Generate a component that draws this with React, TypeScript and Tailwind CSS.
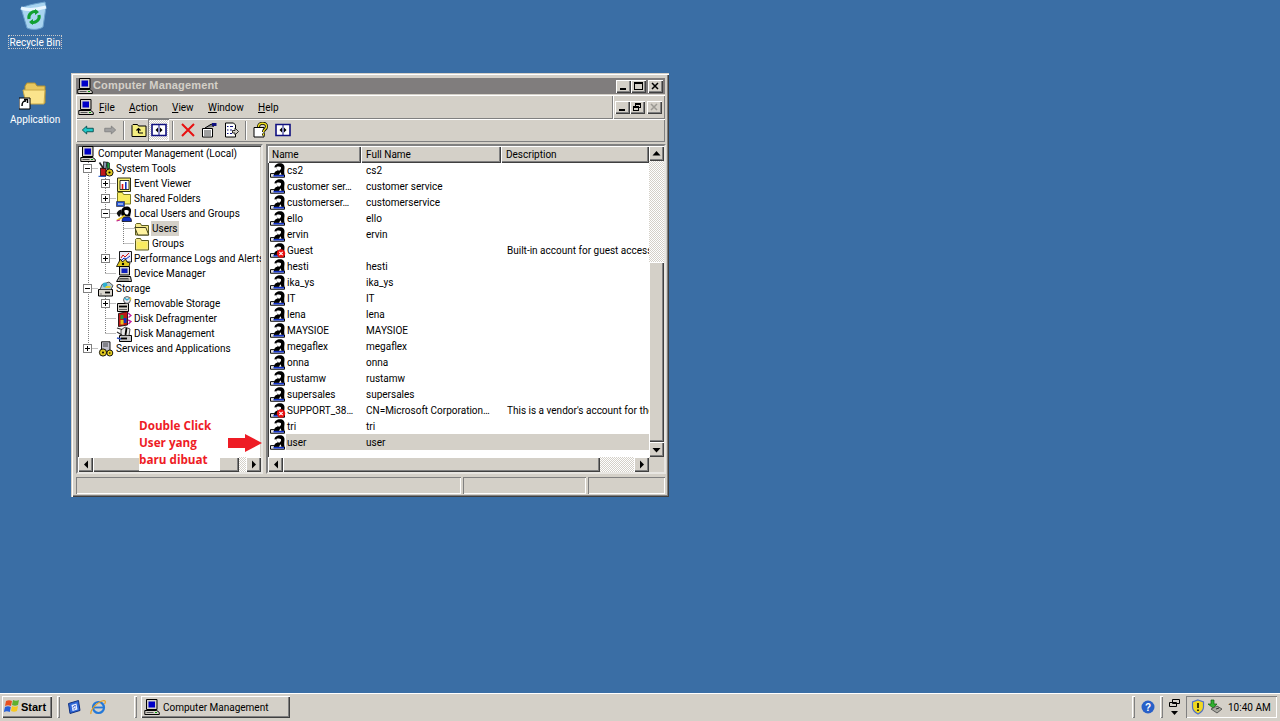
import React from 'react';

/* Win2k bevels */
const raised = 'bg-[#d4d0c8] shadow-[inset_1px_1px_0_#fff,inset_-1px_-1px_0_#404040,inset_-2px_-2px_0_#808080]';
const thin = 'shadow-[inset_1px_1px_0_#fff,inset_-1px_-1px_0_#808080]';
const sunken = 'border-2 border-t-[#808080] border-l-[#808080] border-r-[#e8e6e2] border-b-[#e8e6e2] shadow-[inset_1px_1px_0_#404040,inset_-1px_-1px_0_#d4d0c8]';
const dither = 'bg-[repeating-conic-gradient(#ffffff_0_25%,#d4d0c8_0_50%)] bg-size-[2px_2px]';

const Svg: React.FC<{ s?: number; className?: string; children: React.ReactNode }> = ({ s = 16, className, children }) => (
  <svg width={s} height={s} viewBox="0 0 16 16" className={`shrink-0 ${className ?? ''}`}>{children}</svg>
);

const ComputerIcon = () => (
  <Svg>
    <path d="M2.500.5h10.500v10H2.500z" fill="#d4d0c8" stroke="#000" />
    <path d="M4.500 2.500h6.500v6H4.500z" fill="#0000c8" />
    <path d="M.8 11.500h12l2.500 2v2H.8z" fill="#d4d0c8" stroke="#000" />
    <path d="M2.500 13.500h7" stroke="#555" />
    <path d="M11 13.500h2" stroke="#00a000" />
  </Svg>
);

const UserIcon: React.FC<{ off?: boolean }> = ({ off }) => (
  <Svg>
    <g transform="translate(0 1) scale(1 .92)">
      <path d="M.5 11.500h4v1.500h10v2.500H.5z" fill="#e8e8e8" stroke="#000" />
      <path d="M3.500 12.700h10.500v2H3.500z" fill="#1030c8" />
      <path d="M4.500 5C4.500 2 7 .3 10 .3c3 0 4.800 2 4.500 5-.2 2-.5 4 0 7.400H4c0-2 1-3.700 3-4.200l1-1C7 7 6.500 5.500 6.500 4.500z" fill="#000" />
      <path d="M6.300 4.300c2-.7 3.600-.6 4.700.3.300 1.600-.4 3.100-1.800 3.700C7.500 8 6.500 6.300 6.300 4.300z" fill="#fff" />
      <path d="M9 12.700l1.500-2.700 1 2.700z" fill="#fff" />
    </g>
    {off && (
      <>
        <circle cx="11" cy="11.500" r="4.200" fill="#e81010" />
        <path d="M9.300 9.800l3.400 3.400m0-3.400l-3.400 3.400" stroke="#fff" strokeWidth="1.200" />
      </>
    )}
  </Svg>
);

const FolderIcon: React.FC<{ open?: boolean }> = ({ open }) => (
  <Svg>
    <path d="M1.500 4.500V3.500l1-1h4l1 2h7v9.500h-13z" fill="#f4e88a" stroke="#5c5c20" />
    {open ? (
      <path d="M.8 6.500h11l3 7.500h-11z" fill="#fff3a0" stroke="#40401c" />
    ) : (
      <path d="M3 6h10v6.500H3z" fill="#f8ec60" />
    )}
  </Svg>
);

const ToolsIcon = () => (
  <Svg>
    <path d="M2.500 7h5.500v8H2.500z" fill="#c01818" stroke="#000" strokeWidth=".7" />
    <path d="M5.500.8l3.500.5-1 6.500-2.500-.5z" fill="#8898b0" stroke="#000" strokeWidth=".7" />
    <path d="M1.500 1.500l4 6" stroke="#202020" strokeWidth="1.600" />
    <path d="M9 1l2.500 1v5.500H9z" fill="#20a040" stroke="#000" strokeWidth=".6" />
    <circle cx="11.500" cy="11.500" r="3.600" fill="#e0c820" stroke="#000" strokeWidth=".9" />
    <circle cx="11.500" cy="11.500" r="1.100" fill="#000" />
    <path d="M.5 15.300h7" stroke="#0040c0" />
  </Svg>
);

const EventIcon = () => (
  <Svg>
    <path d="M1.500 2h13v13.500h-13z" fill="#f4ee70" stroke="#303010" />
    <path d="M4 4.500h9v9H4z" fill="#fff" stroke="#000" strokeWidth=".8" />
    <path d="M6.500 13V8" stroke="#e01010" strokeWidth="1.600" />
    <path d="M9.800 13V6" stroke="#1030c0" strokeWidth="1.600" />
  </Svg>
);

const SharedIcon = () => (
  <Svg>
    <path d="M1.500 1.500h5l1 2h7v9.500h-13z" fill="#f8ec60" stroke="#7c7c20" />
    <path d="M.5 10.500h8v5h-8z" fill="#2050d0" stroke="#303040" strokeWidth=".7" />
    <path d="M2 13h5" stroke="#fff" />
  </Svg>
);

const LocalUsersIcon = () => (
  <Svg>
    <path d="M5.500 9.500C4.300 4.500 6 .5 10.500.5c3.200 0 5 2 4.500 5.300-.3 2-.8 3-.8 4.700H11z" fill="#000" />
    <path d="M8.300 4.500c1.900-.6 3.300-.5 4.400.2.200 2-.4 3.300-1.500 4C9.300 8.700 8.300 6.700 8.300 4.500z" fill="#fff" />
    <path d="M.5 7.500C1.500 5 3 4 5.500 3.500 5.500 7 4.500 10 3 11z" fill="#101010" />
    <path d="M1 14.500L9 9.500" stroke="#e8c820" strokeWidth="2" />
    <path d="M6 15.500c0-2.500 1-4.500 3-4.500h3.500c2 0 3 2 3 4.500z" fill="#1030c0" stroke="#000" strokeWidth=".7" />
    <path d="M.5 15l3.500-1" stroke="#c02090" strokeWidth="1.200" />
  </Svg>
);

const PerfIcon = () => (
  <Svg>
    <path d="M3.500.5h12v10.500h-12z" fill="#e8e8f8" stroke="#000" strokeWidth=".9" />
    <path d="M5 7l2-3 2 2 4-4" stroke="#d01010" fill="none" />
    <path d="M5 10l3-3 2 1 4-3" stroke="#1030c0" fill="none" />
    <path d="M.5 15.500l4-7.500 2 3 3-3 1.500 3 3 1-1 3.500z" fill="#e0c820" stroke="#000" strokeWidth=".8" />
    <circle cx="7" cy="13" r="1.200" fill="#000" />
  </Svg>
);

const DeviceIcon = () => (
  <Svg>
    <path d="M3.500.5h10v8.500h-10z" fill="#d4d0c8" stroke="#000" />
    <path d="M5.500 2.500h6v4.500h-6z" fill="#1020c0" />
    <path d="M.6 15.500l2.900-5h11l1 5z" fill="#d4d0c8" stroke="#000" />
    <path d="M3.500 12.500h9M2.800 14h10.500" stroke="#555" />
  </Svg>
);

const StorageIcon = () => (
  <Svg>
    <path d="M.5 8.500h14v6.500H.5z" fill="#d8d4cc" stroke="#000" />
    <path d="M7 11.500h5" stroke="#000" strokeWidth="1.800" />
    <path d="M2 13h2" stroke="#808080" />
    <path d="M2 8.500l2-5 7-2.500 4 3.500-2 4z" fill="#b0c8d0" stroke="#333" strokeWidth=".8" />
    <circle cx="7" cy="4" r="2.400" fill="#30b0d0" />
    <path d="M8 5h5l-1 2H7z" fill="#e0d030" />
  </Svg>
);

const RemovableIcon = () => (
  <Svg>
    <path d="M1.500 7.500h11v8h-11z" fill="#d8d4cc" stroke="#000" />
    <path d="M3 10.500h8" stroke="#000" strokeWidth="1.800" />
    <path d="M3 13.500h8" stroke="#666" />
    <circle cx="11" cy="4" r="3.400" fill="#e8e8f0" stroke="#333" strokeWidth=".8" />
    <path d="M8.500 2l2.500 2 2-1.500" stroke="#20a8d0" strokeWidth="1.200" fill="none" />
    <path d="M14 1l1 2-1 1.500" stroke="#e0c820" fill="none" />
  </Svg>
);

const DefragIcon = () => (
  <Svg>
    <path d="M2.500 2.500l9-2v13.500l-9 1.500z" fill="#c01818" stroke="#000" strokeWidth=".8" />
    <path d="M4.500 4h3v4h-3z" fill="#20a030" />
    <path d="M7.500 7h3v5h-3z" fill="#1030c0" />
    <path d="M4.500 9h3v4.500h-3z" fill="#e8c820" />
    <path d="M12 2l3 2.500-2.500 2M12 9l3 1.500-2.500 2.500" stroke="#c020a0" strokeWidth="1.400" fill="none" />
  </Svg>
);

const DiskIcon = () => (
  <Svg>
    <path d="M3.500 9.500h12v6h-12z" fill="#c8c8c8" stroke="#000" />
    <path d="M5 12.500h6" stroke="#000" strokeWidth="1.800" />
    <path d="M5 4l4-3 5 2-1 6.500H5z" fill="#e8e8e8" stroke="#222" strokeWidth=".8" />
    <path d="M10.500 2l-1 7" stroke="#000" strokeWidth="1.800" />
    <path d="M1 2l5 1.500M1 6l5 3" stroke="#303030" strokeWidth="1.300" />
    <path d="M1 12l4 1" stroke="#3050c0" strokeWidth="1.400" />
  </Svg>
);

const ServicesIcon = () => (
  <Svg>
    <path d="M3.500.8h8.500v10.700H3.500z" fill="#c0c0cc" stroke="#000" strokeWidth=".9" />
    <path d="M5 3h5M5 5h5" stroke="#444" />
    <circle cx="5" cy="11.500" r="3.600" fill="#e0c820" stroke="#000" strokeWidth=".9" />
    <circle cx="5" cy="11.500" r="1" fill="#000" />
    <circle cx="11.800" cy="12" r="3" fill="#e8d020" stroke="#000" strokeWidth=".9" />
    <circle cx="11.800" cy="12" r=".8" fill="#000" />
  </Svg>
);

const Tri: React.FC<{ dir: 'l' | 'r' | 'u' | 'd' }> = ({ dir }) => {
  const pts = { l: '10,3.500 10,11.500 6,7.500', r: '6,3.500 6,11.500 10,7.500', u: '7.500,5 3.500,9.500 11.500,9.500', d: '3.500,6 11.500,6 7.500,10.500' }[dir];
  return (
    <svg width="15" height="15" viewBox="0 0 15 15"><polygon points={pts} fill="#000" /></svg>
  );
};

const ScrollBtn: React.FC<{ dir: 'l' | 'r' | 'u' | 'd' }> = ({ dir }) => (
  <div className={`${raised} w-[15px] h-[15px] shrink-0`}><Tri dir={dir} /></div>
);

const Expander: React.FC<{ open?: boolean }> = ({ open }) => (
  <div className="relative w-[9px] h-[9px] bg-white border border-[#808080] shrink-0">
    <div className="absolute left-[1px] top-[3px] w-[5px] h-[1px] bg-black" />
    {!open && <div className="absolute left-[3px] top-[1px] w-[1px] h-[5px] bg-black" />}
  </div>
);

type TreeRow = { label: string; depth: 0 | 1 | 2 | 3; exp?: 'open' | 'closed'; icon: React.ReactNode; active?: boolean };

const tree: TreeRow[] = [
  { label: 'Computer Management (Local)', depth: 0, icon: <ComputerIcon /> },
  { label: 'System Tools', depth: 1, exp: 'open', icon: <ToolsIcon /> },
  { label: 'Event Viewer', depth: 2, exp: 'closed', icon: <EventIcon /> },
  { label: 'Shared Folders', depth: 2, exp: 'closed', icon: <SharedIcon /> },
  { label: 'Local Users and Groups', depth: 2, exp: 'open', icon: <LocalUsersIcon /> },
  { label: 'Users', depth: 3, icon: <FolderIcon open />, active: true },
  { label: 'Groups', depth: 3, icon: <FolderIcon /> },
  { label: 'Performance Logs and Alerts', depth: 2, exp: 'closed', icon: <PerfIcon /> },
  { label: 'Device Manager', depth: 2, icon: <DeviceIcon /> },
  { label: 'Storage', depth: 1, exp: 'open', icon: <StorageIcon /> },
  { label: 'Removable Storage', depth: 2, exp: 'closed', icon: <RemovableIcon /> },
  { label: 'Disk Defragmenter', depth: 2, icon: <DefragIcon /> },
  { label: 'Disk Management', depth: 2, icon: <DiskIcon /> },
  { label: 'Services and Applications', depth: 1, exp: 'closed', icon: <ServicesIcon /> },
];

const indent = ['w-[2px]', 'w-[20px]', 'w-[38px]', 'w-[56px]'];

type UserRow = [string, string, string?, boolean?];

const users: UserRow[] = [
  ['cs2', 'cs2'],
  ['customer ser…', 'customer service'],
  ['customerser…', 'customerservice'],
  ['ello', 'ello'],
  ['ervin', 'ervin'],
  ['Guest', '', 'Built-in account for guest access to the computer/domain', true],
  ['hesti', 'hesti'],
  ['ika_ys', 'ika_ys'],
  ['IT', 'IT'],
  ['lena', 'lena'],
  ['MAYSIOE', 'MAYSIOE'],
  ['megaflex', 'megaflex'],
  ['onna', 'onna'],
  ['rustamw', 'rustamw'],
  ['supersales', 'supersales'],
  ['SUPPORT_38…', 'CN=Microsoft Corporation…', "This is a vendor's account for the Help and Support Service", true],
  ['tri', 'tri'],
  ['user', 'user'],
];

const TreeLines = () => (
  <svg width="180" height="215" className="absolute left-0 top-0" fill="none" stroke="#808080" strokeDasharray="1 1">
    <path d="M10.500 14V203M10.500 22.500H20M10.500 142.500H20M10.500 202.500H20" />
    <path d="M27.500 28V128M27.500 37.500H38M27.500 52.500H38M27.500 67.500H38M27.500 112.500H38M27.500 127.500H38" />
    <path d="M45.500 75V98M45.500 82.500H56M45.500 97.500H56" />
    <path d="M27.500 148V188M27.500 157.500H38M27.500 172.500H38M27.500 187.500H38" />
  </svg>
);

const TitleBtn: React.FC<{ children: React.ReactNode }> = ({ children }) => (
  <div className={`${raised} relative w-[15px] h-[13px]`}>{children}</div>
);

const ToolSep = () => <div className="w-[2px] h-[19px] border-l border-l-[#808080] border-r border-r-white" />;

const Tool: React.FC<{ w?: string; children: React.ReactNode }> = ({ w = 'w-[23px]', children }) => (
  <div className={`${w} h-[22px] flex items-center justify-center`}>{children}</div>
);

const PanelIcon = () => (
  <Svg>
    <path d="M1 2.500h14v11H1z" fill="#fff" stroke="#101080" strokeWidth="1.600" />
    <path d="M8 3v10" stroke="#101080" />
    <path d="M7 5.500v5L4.500 8zM9 5.500v5l2.500-2.500z" fill="#000" />
  </Svg>
);

const Menu: React.FC<{ first: string; rest: string; className: string }> = ({ first, rest, className }) => (
  <span className={className}><span className="underline">{first}</span>{rest}</span>
);

const Window = () => (
  <div className="absolute left-[71px] top-[73px] w-[598px] h-[424px] pl-[5px] pr-[4px] pt-[5px] flex flex-col bg-[#d4d0c8] shadow-[inset_1px_1px_0_#d4d0c8,inset_2px_2px_0_#fff,inset_-1px_-1px_0_#404040,inset_-2px_-2px_0_#808080] text-black">
    {/* title bar */}
    <div className="h-[16px] bg-[#807d7d] flex items-center pl-[1px] pr-[2px]">
      <ComputerIcon />
      <span className="font-['Liberation_Sans',sans-serif] font-bold text-[11px] text-[#d4d0c8] tracking-[0.15px] -mt-[1px]">Computer Management</span>
      <div className="ml-auto flex items-center">
        <TitleBtn><div className="absolute left-[4px] top-[8px] w-[6px] h-[2px] bg-black" /></TitleBtn>
        <TitleBtn><div className="absolute left-[3px] top-[2px] w-[9px] h-[8px] border border-black border-t-2" /></TitleBtn>
        <div className="w-[2px]" />
        <TitleBtn>
          <svg width="15" height="13" viewBox="0 0 15 13" className="absolute left-0 top-0"><path d="M4 3l6 6m0-6l-6 6" stroke="#000" strokeWidth="1.500" /></svg>
        </TitleBtn>
      </div>
    </div>

    {/* menu bar */}
    <div className="mt-[1px] h-[24px] flex">
      <div className={`w-[537px] flex items-center pl-[2px] relative ${thin}`}>
        <ComputerIcon />
        <Menu first="F" rest="ile" className="absolute left-[23px] mt-[1px]" />
        <Menu first="A" rest="ction" className="absolute left-[53px] mt-[1px]" />
        <Menu first="V" rest="iew" className="absolute left-[96px] mt-[1px]" />
        <Menu first="W" rest="indow" className="absolute left-[132px] mt-[1px]" />
        <Menu first="H" rest="elp" className="absolute left-[182px] mt-[1px]" />
      </div>
      <div className={`flex-1 flex items-center justify-end pr-[3px] ${thin}`}>
        <TitleBtn><div className="absolute left-[4px] top-[8px] w-[6px] h-[2px] bg-black" /></TitleBtn>
        <TitleBtn>
          <div className="absolute left-[5px] top-[2px] w-[6px] h-[5px] border border-black border-t-2" />
          <div className="absolute left-[3px] top-[5px] w-[6px] h-[5px] border border-black border-t-2 bg-[#d4d0c8]" />
        </TitleBtn>
        <div className="w-[2px]" />
        <TitleBtn>
          <svg width="15" height="13" viewBox="0 0 15 13" className="absolute left-0 top-0"><path d="M4 3l6 6m0-6l-6 6" stroke="#9c9a94" strokeWidth="1.500" /></svg>
        </TitleBtn>
      </div>
    </div>

    {/* toolbar */}
    <div className={`h-[23px] flex items-center pb-[1px] ${thin}`}>
      <Tool><Svg s={14}><path d="M1.500 8l5-4.500V6h7.500v4H6.500v2.500z" fill="#20c8c8" stroke="#004848" /></Svg></Tool>
      <Tool w="w-[21px]"><Svg s={14}><path d="M14.500 8l-5-4.500V6H2v4h7.500v2.500z" fill="#a0a0a0" stroke="#808080" /></Svg></Tool>
      <div className="w-[3px]" /><ToolSep /><div className="w-[4px]" />
      <Tool w="w-[19px]">
        <Svg>
          <path d="M1 3.500l1-1h4.500l1 1.500H15v10.500H1z" fill="#f4ee80" stroke="#000" />
          <path d="M7.500 11V7M5.500 8.500l2-2 2 2M7.500 11H12" stroke="#000" strokeWidth="1.200" fill="none" />
        </Svg>
      </Tool>
      <Tool w="w-[21px]">
        <div className={`w-[21px] h-[22px] flex items-center justify-center ${dither} shadow-[inset_1px_1px_0_#808080,inset_-1px_-1px_0_#fff]`}><PanelIcon /></div>
      </Tool>
      <div className="w-[3px]" /><ToolSep /><div className="w-[4px]" />
      <Tool w="w-[20px]"><Svg><path d="M2 2l12 12m0-12L2 14" stroke="#e81010" strokeWidth="2" /></Svg></Tool>
      <Tool w="w-[22px]">
        <Svg>
          <path d="M1.500 6.500h10v8.500h-10z" fill="#fff" stroke="#000" />
          <path d="M3 9h7M3 11h7M3 13h7" stroke="#404040" />
          <path d="M4 6l6.500-4 2 3" fill="#808080" stroke="#000" />
          <path d="M11 1h4.500v3H11z" fill="#101080" />
        </Svg>
      </Tool>
      <Tool w="w-[22px]">
        <Svg>
          <path d="M2.500 1h8l2 2v12h-10z" fill="#fff" stroke="#000" />
          <path d="M4 4.500h1.500M7 4.500h3M4 8h1.500M7 8h2M4 11.500h1.500M7 11.500h2" stroke="#101080" />
          <path d="M9.500 8.500h2.500V6l3.500 3.500L12 13v-2H9.500z" fill="#d4d0c8" stroke="#000" strokeWidth=".8" />
        </Svg>
      </Tool>
      <div className="w-[3px]" /><ToolSep /><div className="w-[3px]" />
      <Tool w="w-[22px]">
        <Svg>
          <path d="M1 5.500h10v9.500H1z" fill="#fff" stroke="#000" />
          <path d="M5.500 5c0-5 8-5 8-.5 0 3-3 2.500-3 5.500M10.500 11.500v2" stroke="#000" strokeWidth="3" fill="none" />
          <path d="M5.500 5c0-5 8-5 8-.5 0 3-3 2.500-3 5.500M10.500 11.500v2" stroke="#f0e020" strokeWidth="1.500" fill="none" />
        </Svg>
      </Tool>
      <Tool w="w-[22px]"><PanelIcon /></Tool>
    </div>

    {/* panes */}
    <div className="mt-[2px] h-[330px] flex gap-[3px]">
      <div className={`w-[187px] relative bg-white flex flex-col ${sunken}`}>
        <div className="flex-1 relative overflow-hidden">
          <TreeLines />
          <div className="relative">
            {tree.map((r) => (
              <div key={r.label} className="h-[15px] flex items-center whitespace-nowrap">
                <div className={`${indent[r.depth]} shrink-0 flex justify-end`}>
                  {r.exp && <div className="mr-[6px]"><Expander open={r.exp === 'open'} /></div>}
                </div>
                {r.icon}
                <span className={`ml-[1px] px-[1px] leading-[15px] ${r.active ? 'bg-[#d4d0c8]' : ''}`}>{r.label}</span>
              </div>
            ))}
          </div>
        </div>
        <div className="h-[15px] flex bg-[#d4d0c8]">
          <ScrollBtn dir="l" />
          <div className={`${raised} flex-1`} />
          <div className={`${dither} w-[7px]`} />
          <ScrollBtn dir="r" />
        </div>
        {/* note written over the screenshot */}
        <div className="absolute left-[61px] top-[271px] w-[81px] h-[54px] bg-white font-['Open_Sans',sans-serif] font-bold text-[11.7px] leading-[17px] text-[#ee1c25]">
          <div>Double Click</div>
          <div>User yang</div>
          <div>baru dibuat</div>
        </div>
      </div>

      <div className={`flex-1 flex flex-col bg-white ${sunken}`}>
        <div className="flex-1 flex min-h-0">
          <div className="flex-1 min-w-0 overflow-hidden">
            <div className="grid grid-cols-[93px_140px_148px] h-[16px] bg-[#d4d0c8]">
              {['Name', 'Full Name', 'Description'].map((h) => (
                <div key={h} className={`${raised} pl-[5px] pt-[1px] leading-[16px] first:pl-[4px]`}>{h}</div>
              ))}
            </div>
            {users.map(([name, full, desc, off]) => (
              <div key={name} className="grid grid-cols-[93px_140px_148px] h-[16px] leading-[17px] whitespace-nowrap">
                <div className="flex items-center pl-[2px]">
                  <UserIcon off={off} />
                  <span className={`flex-1 h-[16px] pl-[1px] ${name === 'user' ? 'bg-[#d4d0c8]' : ''}`}>{name}</span>
                </div>
                <div className={`pl-[5px] overflow-hidden ${name === 'user' ? 'bg-[#d4d0c8]' : ''}`}>{full}</div>
                <div className={`pl-[6px] overflow-hidden ${name === 'user' ? 'bg-[#d4d0c8]' : ''}`}>{desc}</div>
              </div>
            ))}
          </div>
          <div className="w-[15px] flex flex-col bg-[#d4d0c8]">
            <ScrollBtn dir="u" />
            <div className={`${dither} h-[101px]`} />
            <div className={`${raised} flex-1`} />
            <ScrollBtn dir="d" />
          </div>
        </div>
        <div className="h-[15px] flex bg-[#d4d0c8]">
          <ScrollBtn dir="l" />
          <div className={`${raised} w-[317px]`} />
          <div className={`${dither} flex-1`} />
          <ScrollBtn dir="r" />
          <div className="w-[15px]" />
        </div>
      </div>
    </div>

    {/* status bar */}
    <div className="mt-[3px] h-[17px] flex gap-[2px]">
      {['w-[385px]', 'w-[123px]', 'flex-1'].map((w) => (
        <div key={w} className={`${w} shadow-[inset_1px_1px_0_#808080,inset_-1px_-1px_0_#fff]`} />
      ))}
    </div>

    {/* red arrow */}
    <svg width="34" height="18" viewBox="0 0 34 18" className="absolute left-[157px] top-[361px]">
      <path d="M0 4h17V0l17 9-17 9v-4H0z" fill="#ee1c25" />
    </svg>
  </div>
);

const RecycleBin = () => (
  <svg width="30" height="30" viewBox="0 0 30 30">
    <path d="M2 7c6-3 18-5 24-6l1 5-3 20c-4 3-12 3-16 1z" fill="#a8d4f0" stroke="#6aa0cc" />
    <path d="M2 7c8 3 18 1 25-1" stroke="#e8f6ff" strokeWidth="3" fill="none" />
    <path d="M10 18a6 6 0 0 1 8-7M20 14a6 6 0 0 1-8 7" stroke="#10a030" strokeWidth="3" fill="none" />
    <path d="M16 8l4 3-4 3zM14 24l-4-3 4-3z" fill="#10a030" />
  </svg>
);

const AppFolder = () => (
  <svg width="30" height="30" viewBox="0 0 30 30">
    <path d="M6 22V5l2-3h8l2 3h8v17z" fill="#e8c860" stroke="#b09030" />
    <path d="M4 9h22l-1 14H7z" fill="#fbe48c" stroke="#c8a848" />
    <path d="M0 17h11v11H0z" fill="#fff" stroke="#000" />
    <path d="M3 25c0-4 1-5 4-5M5 18.500h3.500v3.500" stroke="#000" strokeWidth="1.500" fill="none" />
  </svg>
);

const TaskSep = () => <div className="w-[3px] h-[22px] shadow-[inset_1px_1px_0_#fff,inset_-1px_-1px_0_#808080]" />;

export default function App() {
  return (
    <div className="w-[1280px] h-[721px] flex flex-col overflow-hidden font-['Roboto','Liberation_Sans',sans-serif] text-[10px]">
      <div className="flex-1 relative bg-[#3a6ea5]">
        {/* desktop icons */}
        <div className="absolute left-[19px] top-[1px]"><RecycleBin /></div>
        <div className="absolute left-[8px] top-[35px] w-[54px] text-center whitespace-nowrap h-[14px] leading-[13px] text-white border border-dotted border-[#c8c8c8]">Recycle Bin</div>
        <div className="absolute left-[19px] top-[81px]"><AppFolder /></div>
        <div className="absolute left-[10px] top-[113px] leading-[14px] text-white">Application</div>
        <Window />
      </div>

      {/* taskbar */}
      <div className="h-[28px] bg-[#d4d0c8] shadow-[inset_0_1px_0_#fff] flex items-center text-black relative">
        <div className={`${raised} ml-[2px] w-[50px] h-[22px] flex items-center pl-[2px]`}>
          <svg width="17" height="16" viewBox="0 0 17 16" className="shrink-0">
            <path d="M2 2c2-1 4-1 6 0l-1 5c-2-1-4-1-6 0z" fill="#e85020" />
            <path d="M9 1c2 1 4 1 6 0l-1 5c-2 1-4 1-6 0z" fill="#60b030" />
            <path d="M1 8c2-1 4-1 5.800 0l-1 5c-2-1-4-1-6 0z" fill="#2860d8" />
            <path d="M8 7c2 1 4 1 6 0l-1 5c-2 1-4 1-6 0z" fill="#f8c820" />
          </svg>
          <span className="font-['Liberation_Sans',sans-serif] font-bold text-[11px]">Start</span>
        </div>
        <div className="ml-[5px]"><TaskSep /></div>
        <div className="ml-[6px]">
          <Svg>
            <path d="M2.500 4.500l10-3 1.500 10-10 3z" fill="#3068d8" stroke="#103080" />
            <path d="M5.500 6l5-1.500 1 6-5 1.500z" fill="#e8f0ff" />
            <path d="M7 8.500a2 2 0 0 1 3-1.500M9.500 9a2 2 0 0 1-2 1" stroke="#2040c0" fill="none" />
          </Svg>
        </div>
        <div className="ml-[8px]">
          <Svg>
            <ellipse cx="8.500" cy="8.500" rx="5.500" ry="5.500" fill="none" stroke="#2478d8" strokeWidth="2.200" />
            <path d="M4 8.500h9" stroke="#2478d8" strokeWidth="1.800" />
            <path d="M1 15c-1-3 5-12 13-13.500 2 0 1.500 2 .5 3.500" stroke="#e8a020" strokeWidth="1.200" fill="none" />
          </Svg>
        </div>
        <div className="ml-[28px]"><TaskSep /></div>
        <div className={`${raised} ml-[4px] w-[149px] h-[22px] flex items-center pl-[3px]`}>
          <ComputerIcon />
          <span className="ml-[3px] mt-[1px]">Computer Management</span>
        </div>

        <div className="ml-auto flex items-center">
          <TaskSep />
          <div className="ml-[6px]">
            <svg width="14" height="14" viewBox="0 0 14 14" className="block">
              <circle cx="7" cy="7" r="6.500" fill="#2860c8" />
              <text x="7" y="10.500" textAnchor="middle" fontSize="10" fontWeight="700" fill="#fff" fontFamily="Liberation Sans">?</text>
            </svg>
          </div>
          <div className="ml-[5px]"><TaskSep /></div>
          <div className="ml-[4px] w-[14px] flex flex-col items-center">
            <svg width="11" height="9" viewBox="0 0 11 9">
              <path d="M3.500 .5h7v4h-7zM.5 3.500h7v4h-7z" fill="#d4d0c8" stroke="#000" />
            </svg>
            <svg width="7" height="5" viewBox="0 0 7 5" className="mt-[3px]"><path d="M0 0h7L3.500 4z" fill="#000" /></svg>
          </div>
          <div className="ml-[5px] w-[91px] h-[22px] mr-[3px] flex items-center pl-[3px] shadow-[inset_1px_1px_0_#808080,inset_-1px_-1px_0_#fff]">
            <Svg className="ml-[1px]">
              <path d="M8 1l5.500 2v5c0 3-2.500 5.500-5.500 7-3-1.500-5.500-4-5.500-7V3z" fill="#f0d820" stroke="#5070c8" strokeWidth="1.200" />
              <path d="M8 4v5M8 10.500v1.500" stroke="#000" strokeWidth="1.500" />
            </Svg>
            <Svg className="ml-[1px]">
              <path d="M4 1v4H1l5 4 4-4H7V1z" fill="#30b030" stroke="#106010" strokeWidth=".7" />
              <path d="M4 10l6-3 5 3-5 4z" fill="#a8a8a0" stroke="#404040" strokeWidth=".8" />
              <path d="M9 10l3-1" stroke="#303030" />
            </Svg>
            <span className="ml-[5px] mt-[1px] whitespace-nowrap">10:40 AM</span>
          </div>
        </div>
      </div>
    </div>
  );
}
